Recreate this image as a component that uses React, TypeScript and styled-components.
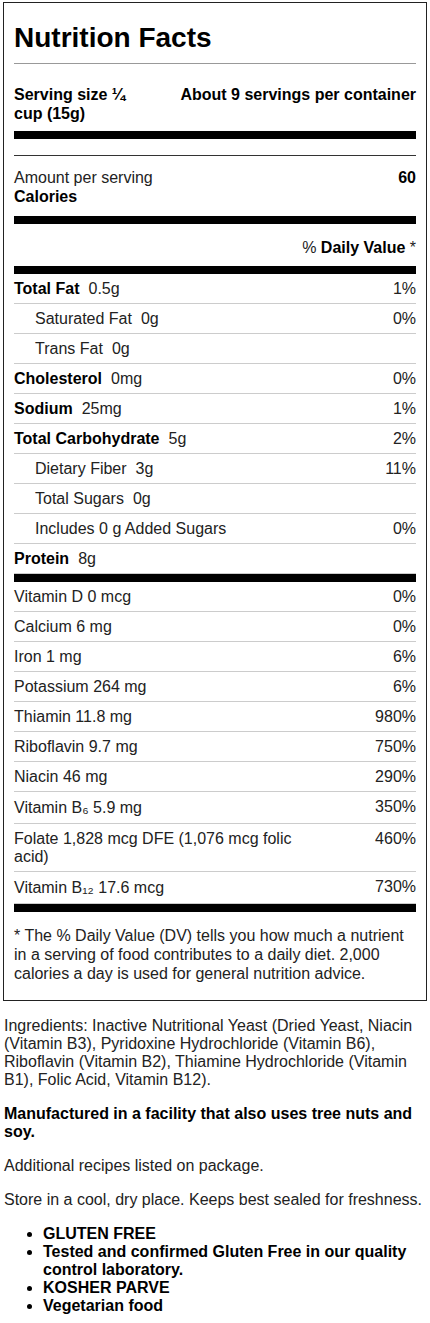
import React from 'react';
import styled, { createGlobalStyle } from 'styled-components';

interface NutrientType {
    name: string,
    amount?: string,
    dv?: string,
    bold?: boolean,
    indent?: boolean
}

const GlobalStyle = createGlobalStyle`
    body {
        margin: 0;
        background: #fff;
        color: #222;
        font-family: "Liberation Sans", Arial, sans-serif;
        font-size: 16px;
    }
`;

const Page = styled.div`
    width: 430px;
    padding-top: 2px;
`;

const Label = styled.section`
    width: 424px;
    margin-left: 3px;
    box-sizing: border-box;
    border: 1px solid #222;
    padding: 0 10px 17px;
`;

const Title = styled.h1`
    margin: 0;
    padding: 19px 0 9px;
    font-size: 28px;
    line-height: 32px;
    font-weight: 700;
    color: #000;
    border-bottom: 1px solid #999;
`;

const ServingRow = styled.div`
    display: flex;
    justify-content: space-between;
    padding: 21px 0 8px;
    font-weight: 700;
    line-height: 19px;
    color: #000;
`;

const ServingSize = styled.div`
    flex: 1;
`;

const Servings = styled.div`
    white-space: nowrap;
    padding-left: 24px;
`;

const ThickBar = styled.div`
    height: 8px;
    background: #000;
`;

const DarkRule = styled.div`
    height: 1px;
    margin-top: 16px;
    background: #333;
`;

const CaloriesRow = styled.div`
    display: flex;
    justify-content: space-between;
    align-items: flex-start;
    padding: 12px 0 10px;
    line-height: 19px;
`;

const Strong = styled.span`
    font-weight: 700;
    color: #000;
`;

const DVHeader = styled.div`
    padding: 14px 0 9px;
    line-height: 19px;
    text-align: right;
`;

const Row = styled.div<{ $indent?: boolean }>`
    display: flex;
    align-items: flex-start;
    padding: 6px 0 5px ${p => p.$indent ? '21px' : '0'};
    line-height: 18px;
    border-bottom: 1px solid #ccc;
`;

const Name = styled.span<{ $bold?: boolean }>`
    margin-right: 9px;
    font-weight: ${p => p.$bold ? 700 : 400};
    color: ${p => p.$bold ? '#000' : '#222'};
`;

const Text = styled.div<{ $tall?: boolean }>`
    flex: 1;
    line-height: ${p => p.$tall ? '20px' : '18px'};
`;

const Percent = styled.div`
    flex: 0 0 90px;
    text-align: right;
    white-space: nowrap;
`;

const Footnote = styled.p`
    margin: 0;
    padding-top: 14px;
    line-height: 19px;
`;

const Info = styled.div`
    padding: 0 4px;
    p {
        margin: 16px 0;
    }
`;

const Bold = styled.p`
    font-weight: 700;
    color: #000;
`;

const List = styled.ul`
    margin: 16px 0 0;
    padding-left: 39px;
    font-weight: 700;
    color: #000;
`;

const nutrients: NutrientType[] = [
    { name: 'Total Fat', amount: '0.5g', dv: '1%', bold: true },
    { name: 'Saturated Fat', amount: '0g', dv: '0%', indent: true },
    { name: 'Trans Fat', amount: '0g', indent: true },
    { name: 'Cholesterol', amount: '0mg', dv: '0%', bold: true },
    { name: 'Sodium', amount: '25mg', dv: '1%', bold: true },
    { name: 'Total Carbohydrate', amount: '5g', dv: '2%', bold: true },
    { name: 'Dietary Fiber', amount: '3g', dv: '11%', indent: true },
    { name: 'Total Sugars', amount: '0g', indent: true },
    { name: 'Includes 0 g Added Sugars', dv: '0%', indent: true },
    { name: 'Protein', amount: '8g', bold: true },
];

// subscript rows sit a little taller in the original label
const vitamins = [
    { text: 'Vitamin D 0 mcg', dv: '0%' },
    { text: 'Calcium 6 mg', dv: '0%' },
    { text: 'Iron 1 mg', dv: '6%' },
    { text: 'Potassium 264 mg', dv: '6%' },
    { text: 'Thiamin 11.8 mg', dv: '980%' },
    { text: 'Riboflavin 9.7 mg', dv: '750%' },
    { text: 'Niacin 46 mg', dv: '290%' },
    { text: 'Vitamin B₆ 5.9 mg', dv: '350%', tall: true },
    { text: 'Folate 1,828 mcg DFE (1,076 mcg folic acid)', dv: '460%' },
    { text: 'Vitamin B₁₂ 17.6 mcg', dv: '730%', tall: true },
];

function App() {
    return (
        <Page>
            <GlobalStyle />
            <Label>
                <Title>Nutrition Facts</Title>
                <ServingRow>
                    <ServingSize>Serving size ¼ cup (15g)</ServingSize>
                    <Servings>About 9 servings per container</Servings>
                </ServingRow>
                <ThickBar />
                <DarkRule />
                <CaloriesRow>
                    <div>
                        Amount per serving<br />
                        <Strong>Calories</Strong>
                    </div>
                    <Strong>60</Strong>
                </CaloriesRow>
                <ThickBar />
                <DVHeader>% <Strong>Daily Value</Strong> *</DVHeader>
                <ThickBar />
                <div>
                    {
                        nutrients.map((item, i) => (
                            <Row key={i} $indent={item.indent}>
                                <Text>
                                    <Name $bold={item.bold}>{item.name}</Name>
                                    {item.amount}
                                </Text>
                                <Percent>{item.dv}</Percent>
                            </Row>
                        ))
                    }
                </div>
                <ThickBar />
                <div>
                    {
                        vitamins.map((item, i) => (
                            <Row key={i}>
                                <Text $tall={item.tall}>{item.text}</Text>
                                <Percent>{item.dv}</Percent>
                            </Row>
                        ))
                    }
                </div>
                <ThickBar />
                <Footnote>
                    * The % Daily Value (DV) tells you how much a nutrient in a serving of food contributes to a daily diet. 2,000 calories a day is used for general nutrition advice.
                </Footnote>
            </Label>
            <Info>
                <p>Ingredients: Inactive Nutritional Yeast (Dried Yeast, Niacin (Vitamin B3), Pyridoxine Hydrochloride (Vitamin B6), Riboflavin (Vitamin B2), Thiamine Hydrochloride (Vitamin B1), Folic Acid, Vitamin B12).</p>
                <Bold>Manufactured in a facility that also uses tree nuts and soy.</Bold>
                <p>Additional recipes listed on package.</p>
                <p>Store in a cool, dry place. Keeps best sealed for freshness.</p>
                <List>
                    <li>GLUTEN FREE</li>
                    <li>Tested and confirmed Gluten Free in our quality control laboratory.</li>
                    <li>KOSHER PARVE</li>
                    <li>Vegetarian food</li>
                </List>
            </Info>
        </Page>
    );
}

export default App;
